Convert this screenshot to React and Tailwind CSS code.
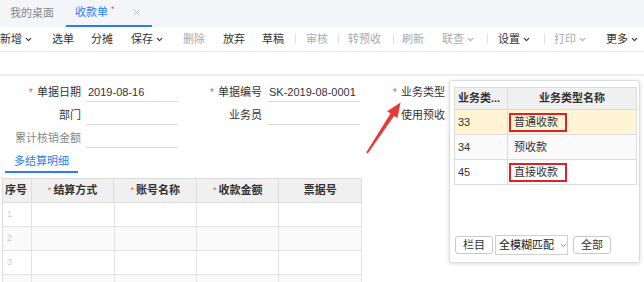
import { ChevronDown, X } from "lucide-react";

const tools = [
  { t: "新增", dd: true, on: true, ml: "ml-0" },
  { t: "选单", on: true, ml: "ml-[19px]" },
  { t: "分摊", on: true, ml: "ml-[17px]" },
  { t: "保存", dd: true, on: true, ml: "ml-[18px]" },
  { t: "删除", ml: "ml-[19px]" },
  { t: "放弃", on: true, ml: "ml-[18px]" },
  { t: "草稿", on: true, ml: "ml-[17px]" },
  { sep: true, ml: "ml-[11px]" },
  { t: "审核", ml: "ml-[10px]" },
  { sep: true, ml: "ml-[10px]" },
  { t: "转预收", ml: "ml-[9px]" },
  { sep: true, ml: "ml-[12px]" },
  { t: "刷新", ml: "ml-[8px]" },
  { t: "联查", dd: true, ml: "ml-[18px]" },
  { sep: true, ml: "ml-[12px]" },
  { t: "设置", dd: true, on: true, ml: "ml-[10px]" },
  { sep: true, ml: "ml-[13px]" },
  { t: "打印", dd: true, ml: "ml-[9px]" },
  { t: "更多", dd: true, on: true, ml: "ml-[19px]" },
];

function Star() {
  return <span className="text-[#e8505b] mr-[4px] text-[10px]">*</span>;
}

function Field({ label, req, value, lw, iw, gray }) {
  return (
    <div className="flex items-start h-[23px]">
      <div className={`${lw} h-[22px] pt-[3px] flex items-center justify-end ${gray ? "text-[#888]" : "text-[#333]"}`}>
        {req && <Star />}
        {label}
      </div>
      {iw && (
        <div className={`${iw} ml-[5px] h-[22px] pt-[3px] border-b border-[#d9d9d9] flex items-center pl-[2px] text-[#333]`}>
          {value}
        </div>
      )}
    </div>
  );
}

export default function App() {
  return (
    <div className="w-[644px] h-[282px] overflow-hidden bg-white relative font-['Liberation_Sans','Noto_Sans_CJK_SC',sans-serif] text-[11px] leading-none">
      {/* tabs */}
      <div className="h-[27px] bg-[#f3f5f9] flex items-stretch pl-[10px]">
        <div className="flex items-center text-[#888]">我的桌面</div>
        <div className="ml-[12px] pl-[9px] pr-[10px] flex items-center border-b-2 border-[#2d7cf4] text-[#2d7cf4]">
          收款单
          <span className="text-[#e8505b] text-[9px] ml-[3px] -mt-[6px]">*</span>
          <X size={11} strokeWidth={1.6} className="ml-[16px] text-[#aab]" />
        </div>
      </div>

      {/* toolbar */}
      <div className="h-[25px] flex items-center border-b border-[#e8e8e8] bg-white">
        {tools.map((it, i) =>
          it.sep ? (
            <div key={i} className={`${it.ml} w-px h-[10px] bg-[#e0e0e0]`} />
          ) : (
            <div key={i} className={`${it.ml} flex items-center ${it.on ? "text-[#333]" : "text-[#aaa]"}`}>
              {it.t}
              {it.dd && <ChevronDown size={9} strokeWidth={3} className="ml-[2px]" />}
            </div>
          )
        )}
      </div>

      <div className="h-[24px] bg-white border-b-2 border-[#eceef2]" />

      {/* form */}
      <div className="pt-[4px] flex">
        <div className="flex flex-col">
          <Field label="单据日期" req value="2019-08-16" lw="w-[81px]" iw="w-[92px]" />
          <Field label="部门" lw="w-[81px]" iw="w-[92px]" />
          <Field label="累计核销金额" gray lw="w-[81px]" iw="w-[92px]" />
        </div>
        <div className="flex flex-col">
          <Field label="单据编号" req value="SK-2019-08-0001" lw="w-[84px]" iw="w-[93px]" />
          <Field label="业务员" lw="w-[84px]" iw="w-[93px]" />
        </div>
        <div className="flex flex-col">
          <Field label="业务类型" req lw="w-[85px]" />
          <Field label="使用预收" lw="w-[85px]" />
        </div>
      </div>

      {/* sub tab */}
      <div className="h-[24px] pl-[5px] flex">
        <div className="w-[73px] pt-[2px] flex items-center justify-center text-[#2d7cf4] border-b-2 border-[#2d7cf4]">
          多结算明细
        </div>
      </div>

      {/* detail table */}
      <div className="mt-[5px] ml-[2px] w-[360px] border-l border-t border-[#dcdcdc]">
        <div className="flex h-[24px] bg-[#f0f0f0] text-[#333] font-semibold">
          <div className="w-[29px] border-r border-b border-[#dcdcdc] flex items-center pl-[2px]">序号</div>
          {["结算方式", "账号名称", "收款金额"].map((h) => (
            <div key={h} className="w-[83px] border-r border-b border-[#dcdcdc] flex items-center justify-center">
              <span className="text-[#e8505b] text-[9px] font-normal mr-[2px]">*</span>
              {h}
            </div>
          ))}
          <div className="w-[83px] border-r border-b border-[#dcdcdc] flex items-center justify-center">票据号</div>
        </div>
        {[1, 2, 3, 4].map((n) => (
          <div key={n} className={`flex h-[24px] ${n % 2 === 0 ? "bg-[#fafafa]" : "bg-white"}`}>
            <div className="w-[29px] border-r border-b border-[#e3e3e3] flex items-center pl-[4px] text-[#ccc] text-[9px]">{n < 4 ? n : ""}</div>
            <div className="w-[83px] border-r border-b border-[#e3e3e3]" />
            <div className="w-[83px] border-r border-b border-[#e3e3e3]" />
            <div className="w-[82px] border-r border-b border-[#e3e3e3]" />
            <div className="w-[83px] border-r border-b border-[#e3e3e3]" />
          </div>
        ))}
      </div>

      {/* arrow */}
      <svg className="absolute left-[360px] top-[98px]" width="46" height="62" viewBox="360 98 46 62">
        <polygon points="366.2,152.4 390.5,113.5 387.1,111.3 400.6,102.4 397.4,118.1 394.1,115.9 367.8,153.6" fill="#e83a35" />
      </svg>

      {/* dropdown */}
      <div className="absolute left-[449px] top-[80px] w-[191px] h-[183px] bg-white border border-[#d9dde3] rounded-[3px] shadow-[0_1px_4px_rgba(0,0,0,0.15)] flex flex-col px-[4px] pt-[6px]">
        <div className="border-l border-t border-[#dcdcdc] w-[183px]">
          <div className="flex h-[22px] bg-[#f0f0f0] font-bold text-[#333]">
            <div className="w-[53px] border-r border-b border-[#dcdcdc] flex items-center pl-[3px]">业务类...</div>
            <div className="flex-1 border-r border-b border-[#dcdcdc] flex items-center justify-center">业务类型名称</div>
          </div>
          {[
            { c: "33", n: "普通收款", bg: "bg-[#fff4d4]", box: true },
            { c: "34", n: "预收款", bg: "bg-[#fafafa]" },
            { c: "45", n: "直接收款", bg: "bg-white", box: true },
          ].map((r) => (
            <div key={r.c} className={`flex h-[25px] ${r.bg} text-[#333]`}>
              <div className="w-[53px] border-r border-b border-[#dcdcdc] flex items-center pl-[3px]">{r.c}</div>
              <div className="flex-1 border-r border-b border-[#dcdcdc] flex items-center pl-px">
                <span className={`h-[19px] w-[58px] flex items-center pl-[3px] ${r.box ? "border-2 border-[#e0202a]" : "border-2 border-transparent"}`}>
                  {r.n}
                </span>
              </div>
            </div>
          ))}
        </div>
        <div className="mt-auto mb-[7px] flex items-center text-[#333]">
          <div className="ml-[1px] shrink-0 w-[38px] h-[18px] border border-[#c8c8c8] rounded-[3px] flex items-center justify-center">栏目</div>
          <div className="ml-[2px] shrink-0 w-[73px] h-[20px] border border-[#d0d0d0] flex items-center pl-[3px] text-[#222] whitespace-nowrap">
            全模糊匹配
            <ChevronDown size={9} strokeWidth={2} className="ml-[5px] shrink-0 text-[#666]" />
          </div>
          <div className="ml-[5px] shrink-0 w-[38px] h-[18px] border border-[#c8c8c8] rounded-[3px] flex items-center justify-center">全部</div>
        </div>
      </div>
    </div>
  );
}
